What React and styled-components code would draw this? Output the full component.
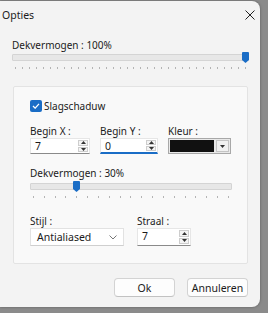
import styled, { createGlobalStyle } from "styled-components";

const GlobalStyle = createGlobalStyle`
  html, body {
    margin: 0;
    padding: 0;
    background: #8b8b8b;
  }
  body {
    font-family: "Noto Sans", "Open Sans", sans-serif;
    font-size: 10px;
    color: #1b1b1b;
  }
`;

const Page = styled.div`
  width: 268px;
  height: 313px;
  padding-top: 1px;
  box-sizing: border-box;
  overflow: hidden;
`;

const Dialog = styled.div`
  width: 260px;
  height: 306px;
  background: #f3f3f3;
  border-radius: 0 8px 8px 0;
  box-shadow: 0 0 3px rgba(0, 0, 0, 0.35);
  display: flex;
  flex-direction: column;
`;

const TitleBar = styled.div`
  height: 28px;
  display: flex;
  align-items: center;
  justify-content: space-between;
  padding: 0 5px 0 2px;
`;

const Title = styled.span`
  font-size: 10.5px;
`;

const Content = styled.div`
  padding: 9px 12px 0 12px;
  display: flex;
  flex-direction: column;
`;

const Label = styled.div`
  line-height: 14px;
  height: 14px;
  white-space: nowrap;
  margin-top: ${(p) => p.$top || 0}px;
`;

const SliderBox = styled.div`
  position: relative;
  width: ${(p) => p.$w}px;
  height: 17px;
  margin-top: ${(p) => p.$top || 0}px;
`;

const Track = styled.div`
  margin-top: 2px;
  height: 5px;
  background: #e7e7e7;
  border: 1px solid #d4d4d4;
  border-radius: 1px;
`;

const Thumb = styled.svg`
  position: absolute;
  top: 0;
`;

const Ticks = styled.div`
  display: flex;
  justify-content: space-between;
  margin-top: 6px;
  padding: 0 3px;
`;

const Tick = styled.span`
  width: 1px;
  height: 2px;
  background: #b4b4b4;
`;

const Slider = ({ width, value, ticks, top }) => (
  <SliderBox $w={width} $top={top}>
    <Track />
    <Thumb
      width="7"
      height="11"
      viewBox="0 0 7 11"
      style={{ left: Math.round(value * (width - 7)) }}
    >
      <path d="M1 0 H6 Q7 0 7 1 V8 L3.5 11 L0 8 V1 Q0 0 1 0 Z" fill="#1a6dc6" />
    </Thumb>
    <Ticks>
      {Array.from({ length: ticks }).map((_, i) => (
        <Tick key={i} />
      ))}
    </Ticks>
  </SliderBox>
);

const Panel = styled.div`
  margin: 17px 0 0 1px;
  width: 235px;
  box-sizing: border-box;
  background: #f9f9f9;
  border: 1px solid #e3e3e3;
  border-radius: 2px;
  padding: 12px 16px 17px 16px;
  display: flex;
  flex-direction: column;
`;

const CheckRow = styled.label`
  display: flex;
  align-items: center;
  gap: 2px;
  height: 13px;
`;

const CheckBox = styled.span`
  width: 12px;
  height: 12px;
  border-radius: 2px;
  background: #1a6dc6;
  display: flex;
  align-items: center;
  justify-content: center;
`;

const Row = styled.div`
  display: flex;
  gap: ${(p) => p.$gap}px;
  margin-top: ${(p) => p.$top}px;
`;

const Field = styled.div`
  display: flex;
  flex-direction: column;
  width: ${(p) => p.$w}px;
`;

const SpinBox = styled.div`
  display: flex;
  align-items: stretch;
  height: ${(p) => p.$h || 16}px;
  box-sizing: border-box;
  background: #fff;
  border: 1px solid #e6e6e6;
  border-bottom: ${(p) => (p.$focus ? "2px solid #1a6dc6" : "1px solid #8a8a8a")};
`;

const SpinValue = styled.div`
  flex: 1;
  padding-left: 4px;
  line-height: 14px;
  font-size: 10.5px;
`;

const SpinButtons = styled.div`
  width: 10px;
  display: flex;
  flex-direction: column;
  gap: 1px;
  padding: 1px 1px 1px 0;
`;

const SpinBtn = styled.div`
  flex: 1;
  border: 1px solid #cdcdcd;
  background: #f4f4f4;
  display: flex;
  align-items: center;
  justify-content: center;
`;

const Arrow = ({ down }) => (
  <svg width="5" height="3" viewBox="0 0 5 3">
    <path d={down ? "M0 0 H5 L2.5 3 Z" : "M0 3 H5 L2.5 0 Z"} fill="#333" />
  </svg>
);

const SpinInput = ({ value, focus, h }) => (
  <SpinBox $focus={focus} $h={h}>
    <SpinValue>{value}</SpinValue>
    <SpinButtons>
      <SpinBtn>
        <Arrow />
      </SpinBtn>
      <SpinBtn>
        <Arrow down />
      </SpinBtn>
    </SpinButtons>
  </SpinBox>
);

const ColorPicker = styled.div`
  display: flex;
  height: 16px;
  box-sizing: border-box;
  border: 1px solid #a8a8a8;
  background: #e9e9e9;
  padding: 1px;
  gap: 2px;
`;

const Swatch = styled.div`
  flex: 1;
  background: #111;
`;

const DropBtn = styled.div`
  width: 11px;
  border: 1px solid #c4c4c4;
  background: #f1f1f1;
  display: flex;
  align-items: center;
  justify-content: center;
`;

const Combo = styled.div`
  height: 18px;
  box-sizing: border-box;
  background: #fff;
  border: 1px solid #e2e2e2;
  border-bottom-color: #cfcfcf;
  display: flex;
  align-items: center;
  justify-content: space-between;
  padding: 0 6px 0 6px;
  font-size: 10.5px;
`;

const Buttons = styled.div`
  display: flex;
  justify-content: flex-end;
  gap: 12px;
  margin-top: 14px;
`;

const Button = styled.button`
  width: 61px;
  height: 19px;
  padding: 0;
  font: inherit;
  font-size: 10.5px;
  color: #1b1b1b;
  background: #fdfdfd;
  border: 1px solid #d3d3d3;
  border-bottom-color: #c2c2c2;
  border-radius: 4px;
`;

export default function App() {
  return (
    <Page>
      <GlobalStyle />
      <Dialog>
        <TitleBar>
          <Title>Opties</Title>
          <svg width="10" height="10" viewBox="0 0 10 10">
            <path d="M0.5 0.5 L9.5 9.5 M9.5 0.5 L0.5 9.5" stroke="#222" strokeWidth="1" />
          </svg>
        </TitleBar>
        <Content>
          <Label>Dekvermogen : 100%</Label>
          <Slider width={237} value={1} ticks={34} />
          <Panel>
            <CheckRow>
              <CheckBox>
                <svg width="8" height="6" viewBox="0 0 9 7">
                  <path d="M1 3.5 L3.5 6 L8 1" stroke="#fff" strokeWidth="1.5" fill="none" />
                </svg>
              </CheckBox>
              <span>Slagschaduw</span>
            </CheckRow>
            <Row $gap={10} $top={12}>
              <Field $w={60}>
                <Label>Begin X :</Label>
                <SpinInput value="7" />
              </Field>
              <Field $w={58}>
                <Label>Begin Y :</Label>
                <SpinInput value="0" focus />
              </Field>
              <Field $w={63}>
                <Label>Kleur :</Label>
                <ColorPicker>
                  <Swatch />
                  <DropBtn>
                    <Arrow down />
                  </DropBtn>
                </ColorPicker>
              </Field>
            </Row>
            <Label $top={12}>Dekvermogen : 30%</Label>
            <Slider width={202} value={0.22} ticks={19} top={1} />
            <Row $gap={13} $top={16}>
              <Field $w={94}>
                <Label>Stijl :</Label>
                <Combo>
                  <span>Antialiased</span>
                  <svg width="8" height="5" viewBox="0 0 8 5">
                    <path d="M0.5 0.5 L4 4 L7.5 0.5" stroke="#777" fill="none" />
                  </svg>
                </Combo>
              </Field>
              <Field $w={54}>
                <Label>Straal :</Label>
                <SpinInput value="7" h={18} />
              </Field>
            </Row>
          </Panel>
          <Buttons>
            <Button>Ok</Button>
            <Button>Annuleren</Button>
          </Buttons>
        </Content>
      </Dialog>
    </Page>
  );
}
